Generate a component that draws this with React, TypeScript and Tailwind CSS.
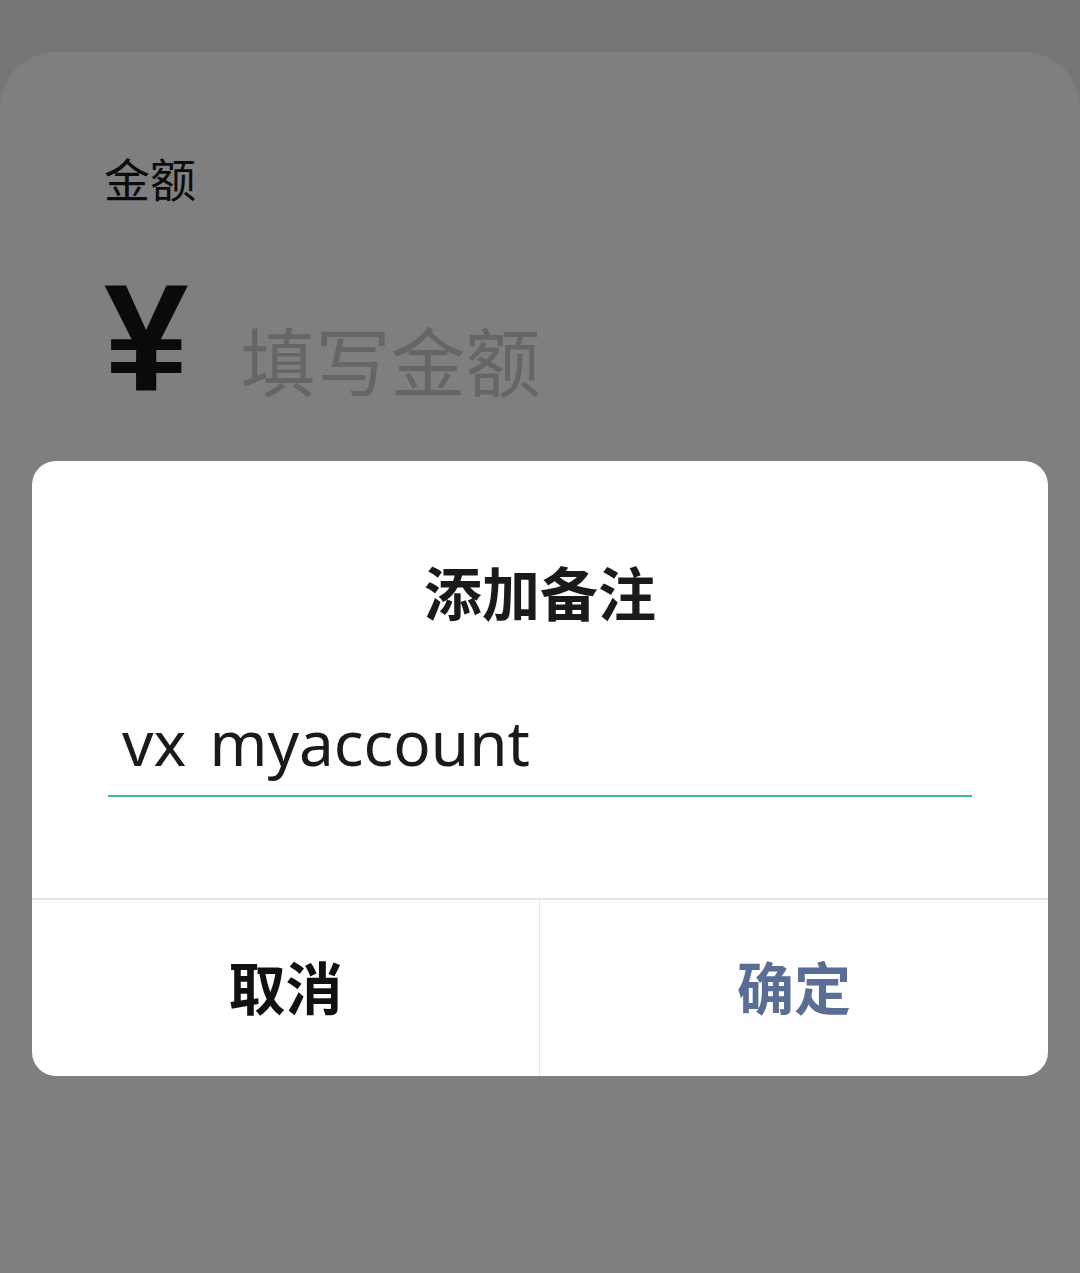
import React from 'react';

const cjk = "font-['Noto_Sans','Noto_Sans_CJK_SC',sans-serif]";

const App = () => {
  return (
    <div className={`relative h-[1273px] w-[1080px] overflow-hidden bg-[#767676] pt-[52px] ${cjk}`}>
      {/* Page behind the dialog */}
      <div className="h-full rounded-t-[56px] bg-[#7f7f7f] px-[104px] pt-[104px]">
        <p className="text-[46px] leading-none text-[#0b0b0b]">金额</p>
        <div className="mt-[60px] flex items-end gap-[52px]">
          <span className="font-['Liberation_Sans',sans-serif] text-[152px] font-bold leading-none text-[#0a0a0a]">¥</span>
          <span className="pb-[14px] text-[75px] leading-none text-[#666666]">填写金额</span>
        </div>
      </div>

      {/* Dialog */}
      <div className="absolute inset-0 px-[32px] pt-[461px]">
        <div className="flex flex-col overflow-hidden rounded-[24px] bg-white">
          <h2 className="pt-[104px] text-center text-[58px] font-bold leading-none text-[#1a1a1a]">添加备注</h2>
          <div className="mx-[76px] mt-[84px] border-b-2 border-[#3fb59b] pb-[17px] pl-[14px]">
            <p className="text-[62px] leading-[1.15] text-[#1a1a1a] [word-spacing:7px]">vx myaccount</p>
          </div>
          <div className="mt-[101px] grid h-[178px] grid-cols-2 border-t-2 border-[#e6e6e6]">
            <button className="border-r border-[#e6e6e6] text-[57px] font-bold text-[#111111]">取消</button>
            <button className="text-[57px] font-bold text-[#5a6d95]">确定</button>
          </div>
        </div>
      </div>
    </div>
  );
};

export default App;
